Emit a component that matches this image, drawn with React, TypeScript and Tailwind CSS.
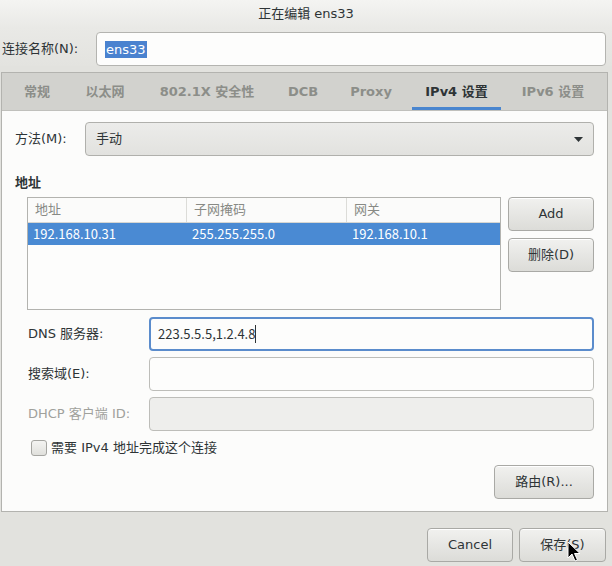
import React from 'react';

const font = { fontFamily: '"DejaVu Sans", "Noto Sans CJK SC", sans-serif' };
const cjk = { fontFamily: '"Noto Sans CJK SC", "DejaVu Sans", sans-serif' };

const Btn = ({ children, className = '' }: { children: React.ReactNode; className?: string }) => (
  <div
    className={`flex items-center justify-center rounded-[4px] border border-[#a9a9a5] bg-gradient-to-b from-[#f1f1ef] to-[#dcdcd8] text-[13px] text-[#2e3436] shadow-[inset_0_1px_0_#ffffff] ${className}`}
  >
    {children}
  </div>
);

const tabs = [
  { label: '常规', w: 'w-[70px]' },
  { label: '以太网', w: 'w-[66px]' },
  { label: '802.1X 安全性', w: 'w-[138px]' },
  { label: 'DCB', w: 'w-[54px]' },
  { label: 'Proxy', w: 'w-[82px]' },
  { label: 'IPv4 设置', w: 'w-[89px]', active: true },
  { label: 'IPv6 设置', w: 'w-[104px]' },
];

const Field = ({
  label,
  value,
  focused,
  disabled,
}: {
  label: string;
  value?: string;
  focused?: boolean;
  disabled?: boolean;
}) => (
  <div className="flex items-center h-[34px] pl-[13px]">
    <div className={`w-[121px] text-[13px] ${disabled ? 'text-[#a0a19c]' : 'text-[#2e3436]'}`}>{label}</div>
    <div
      className={`flex-1 h-[34px] rounded-[4px] flex items-center px-[7px] text-[13px] text-[#2e3436] ${
        focused
          ? 'border-2 border-[#5b8ccc] bg-[#fdfdfc]'
          : disabled
          ? 'border border-[#bdbdb9] bg-[#eeeeec]'
          : 'border border-[#bdbdb9] bg-[#fdfdfc]'
      }`}
    >
      <span style={cjk}>{value}</span>
      {focused && <span className="inline-block w-px h-[18px] bg-[#2e3436]" />}
    </div>
  </div>
);

export default function App() {
  return (
    <div className="relative w-[612px] h-[566px] bg-[#e2e2de] flex flex-col overflow-hidden" style={font}>
      {/* title bar */}
      <div className="h-[28px] flex items-center justify-center bg-gradient-to-b from-[#f4f4f2] to-[#e9e9e6] text-[13px] text-[#2e3436]">
        正在编辑 ens33
      </div>

      <div className="bg-gradient-to-b from-[#e9e9e6] to-[#e3e3df] pt-[4px]">
        {/* connection name */}
        <div className="flex items-center h-[34px] pl-[2px] pr-[6px]">
          <div className="w-[94px] text-[13px] text-[#2e3436]">连接名称(N):</div>
          <div className="flex-1 h-[34px] rounded-[4px] border border-[#b4b4b0] bg-[#fdfdfc] flex items-center px-[8px]">
            <span className="bg-[#4a82cf] text-white text-[13px] leading-[17px] px-[1px]">ens33</span>
          </div>
        </div>
      </div>

      {/* notebook */}
      <div className="mt-[6px] ml-px w-[607px] border border-[#b3b3af] flex flex-col">
        <div className="h-[38px] bg-[#d2d2ce] flex border-b border-[#c0c0bc]">
          {tabs.map((t) => (
            <div key={t.label} className={`${t.w} relative flex items-center justify-center`}>
              <span className={`text-[13px] font-bold ${t.active ? 'text-[#2e3436]' : 'text-[#8c8e89]'}`}>{t.label}</span>
              {t.active && <div className="absolute left-0 right-0 bottom-0 h-[3px] bg-[#4a86cf]" />}
            </div>
          ))}
        </div>

        <div className="bg-[#fcfcfb] px-[13px] pt-[11px] pb-[12px] flex flex-col">
          {/* method */}
          <div className="flex items-center h-[34px]">
            <div className="w-[70px] text-[13px] text-[#2e3436]">方法(M):</div>
            <div className="flex-1 h-[34px] rounded-[4px] border border-[#b0b0ac] bg-gradient-to-b from-[#ececea] to-[#e2e2df] flex items-center justify-between pl-[10px] pr-[10px] text-[13px] text-[#2e3436]">
              <span>手动</span>
              <svg width="9" height="5" viewBox="0 0 9 5">
                <path d="M0 0H9L4.5 5Z" fill="#2e3436" />
              </svg>
            </div>
          </div>

          <div className="mt-[18px] h-[18px] text-[13px] font-bold text-[#2e3436] flex items-center">地址</div>

          {/* addresses */}
          <div className="mt-[5px] flex pl-[12px] gap-[7px]">
            <div className="w-[476px] h-[113px] border border-[#b3b3af] bg-[#fdfdfc]">
              <div className="flex h-[25px] border-b border-[#d6d6d2] bg-[#fbfbfa] text-[13px] text-[#888a85]">
                <div className="w-[159px] border-r border-[#dcdcd8] pl-[7px] flex items-center">地址</div>
                <div className="w-[160px] border-r border-[#dcdcd8] pl-[7px] flex items-center">子网掩码</div>
                <div className="flex-1 pl-[7px] flex items-center">网关</div>
              </div>
              <div className="flex h-[22px] bg-[#4a8ad3] text-[13px] text-white" style={cjk}>
                <div className="w-[159px] pl-[5px] flex items-center">192.168.10.31</div>
                <div className="w-[160px] pl-[5px] flex items-center">255.255.255.0</div>
                <div className="flex-1 pl-[5px] flex items-center">192.168.10.1</div>
              </div>
            </div>
            <div className="flex flex-col gap-[7px]">
              <Btn className="w-[86px] h-[34px]">Add</Btn>
              <Btn className="w-[86px] h-[34px]">删除(D)</Btn>
            </div>
          </div>

          {/* fields */}
          <div className="mt-[7px] flex flex-col gap-[6px]">
            <Field label="DNS 服务器:" value="223.5.5.5,1.2.4.8" focused />
            <Field label="搜索域(E):" />
            <Field label="DHCP 客户端 ID:" disabled />
          </div>

          <div className="mt-[9px] flex items-center pl-[16px] h-[16px]">
            <div className="w-[16px] h-[16px] rounded-[3px] border border-[#a5a5a1] bg-gradient-to-b from-[#f4f4f2] to-[#e0e0dc]" />
            <span className="ml-[4px] text-[13px] text-[#2e3436]">需要 IPv4 地址完成这个连接</span>
          </div>

          <div className="mt-[9px] flex justify-end">
            <Btn className="w-[100px] h-[34px]">路由(R)...</Btn>
          </div>
        </div>
      </div>

      {/* dialog buttons */}
      <div className="mt-[16px] flex justify-end gap-[6px] pr-[6px]">
        <Btn className="w-[86px] h-[34px]">Cancel</Btn>
        <Btn className="w-[87px] h-[34px]">保存(S)</Btn>
      </div>

      {/* mouse pointer */}
      <svg className="absolute left-[567px] top-[541px]" width="14" height="22" viewBox="0 0 14 22">
        <path d="M1 1L1 17L5 13L8 20L10.5 19L7.5 12.5L13 12.5Z" fill="#000" stroke="#fff" strokeWidth="1" strokeLinejoin="round" />
      </svg>
    </div>
  );
}
